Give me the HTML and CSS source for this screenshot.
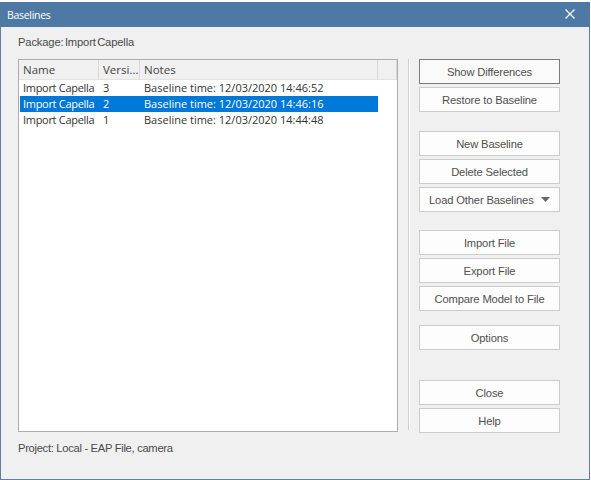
FILE: index.html
```html
<!DOCTYPE html>
<html>
<head>
<meta charset="utf-8">
<link rel="stylesheet" href="styles.css">
</head>
<body>
<div class="window">
  <div class="titlebar">
    <span class="title">Baselines</span>
    <span class="close">
      <svg width="10" height="10" viewBox="0 0 10 10"><path d="M0.5 0.5 L9.5 9.5 M9.5 0.5 L0.5 9.5" stroke="#fff" stroke-width="1.2"/></svg>
    </span>
  </div>
  <div class="body">
    <div class="package">Package: Import Capella</div>
    <div class="main">
      <div class="list">
        <div class="row header">
          <div class="c1">Name</div>
          <div class="c2">Versi...</div>
          <div class="c3">Notes</div>
          <div class="c4"></div>
        </div>
        <div class="row">
          <div class="c1">Import Capella</div>
          <div class="c2">3</div>
          <div class="c3">Baseline time: 12/03/2020 14:46:52</div>
        </div>
        <div class="row selected">
          <div class="c1">Import Capella</div>
          <div class="c2">2</div>
          <div class="c3">Baseline time: 12/03/2020 14:46:16</div>
        </div>
        <div class="row">
          <div class="c1">Import Capella</div>
          <div class="c2">1</div>
          <div class="c3">Baseline time: 12/03/2020 14:44:48</div>
        </div>
      </div>
      <div class="sep"></div>
      <div class="buttons">
        <button class="btn default">Show Differences</button>
        <button class="btn">Restore to Baseline</button>
        <div class="gap1"></div>
        <button class="btn">New Baseline</button>
        <button class="btn">Delete Selected</button>
        <button class="btn drop"><span>Load Other Baselines</span><svg width="9" height="5" viewBox="0 0 9 5"><path d="M0 0 H9 L4.5 5 Z" fill="#666"/></svg></button>
        <div class="gap1b"></div>
        <button class="btn">Import File</button>
        <button class="btn">Export File</button>
        <button class="btn">Compare Model to File</button>
        <div class="gap2"></div>
        <button class="btn">Options</button>
        <div class="gap3"></div>
        <button class="btn">Close</button>
        <button class="btn">Help</button>
      </div>
    </div>
    <div class="project">Project: Local - EAP File, camera</div>
  </div>
</div>
</body>
</html>
```

FILE: styles.css
```css
html, body {
  margin: 0;
  padding: 0;
  background: #ffffff;
}
.window {
  width: 590px;
  height: 478px;
  margin-top: 2px;
  display: flex;
  flex-direction: column;
  font-family: "Liberation Sans", Arial, sans-serif;
}
.titlebar {
  height: 25px;
  background: #4d79a4;
  display: flex;
  align-items: center;
  justify-content: space-between;
  padding: 0 15px 0 7px;
  color: #fff;
  font-family: "Open Sans", "Noto Sans", sans-serif;
  font-size: 10.5px;
  letter-spacing: -0.3px;
}
.close {
  display: flex;
  align-items: center;
  margin-top: -2px;
}
.body {
  flex: 1;
  background: #f0f0f0;
  border: 1px solid #5f7fa3;
  border-top: none;
  padding: 8px 0 0 17px;
  display: flex;
  flex-direction: column;
  color: #4a4a4a;
}
.package {
  font-size: 11.2px;
  height: 15px;
  line-height: 15px;
  letter-spacing: -0.15px;
  word-spacing: -1.5px;
}
.main {
  display: flex;
  margin-top: 9px;
}
.list {
  width: 378px;
  height: 371px;
  border: 1px solid #adadad;
  background: #fff;
  font-family: "Open Sans", "Noto Sans", sans-serif;
  font-size: 11px;
  color: #333;
  display: flex;
  flex-direction: column;
}
.row {
  display: flex;
  height: 16px;
  line-height: 15px;
}
.row div {
  box-sizing: border-box;
  white-space: nowrap;
  overflow: hidden;
}
.row.header {
  height: 20px;
  line-height: 19px;
  background: #f0f0f0;
  color: #444;
  font-size: 11.5px;
}
.row.header div {
  border-right: 1px solid #d9d9d9;
  border-bottom: 1px solid #e3e3e3;
}
.c1 { width: 80px; padding-left: 4px; }
.c2 { width: 41px; padding-left: 4px; }
.c3 { width: 238px; padding-left: 4px; }
.c4 { flex: 1; }
.row:not(.header) .c1 { margin-left: 1px; width: 79px; padding-left: 3px; letter-spacing: -0.3px; }
.selected .c1, .selected .c2, .selected .c3 {
  background: #0078d7;
  color: #fff;
}
.sep {
  width: 1px;
  height: 371px;
  margin-left: 10px;
  background: #cfcfcf;
  border-right: 1px solid #fbfbfb;
}
.buttons {
  display: flex;
  flex-direction: column;
  margin-left: 9px;
  gap: 3px;
}
.btn {
  width: 141px;
  height: 25px;
  background: #fdfdfd;
  border: 1px solid #cccccc;
  font-family: "Liberation Sans", Arial, sans-serif;
  font-size: 11.2px;
  color: #505050;
  letter-spacing: -0.15px;
  padding: 0;
  margin: 0;
  display: flex;
  align-items: center;
  justify-content: center;
}
.btn.default {
  border: 1px solid #7a7a7a;
  background: #fafafa;
}
.btn.drop {
  justify-content: space-between;
  padding: 0 9px 0 9px;
}
.gap1 { height: 13px; }
.gap1b { height: 12px; }
.gap2 { height: 8px; }
.gap3 { height: 24px; }
.project {
  margin-top: 9px;
  font-size: 11.2px;
  letter-spacing: -0.3px;
}
```
